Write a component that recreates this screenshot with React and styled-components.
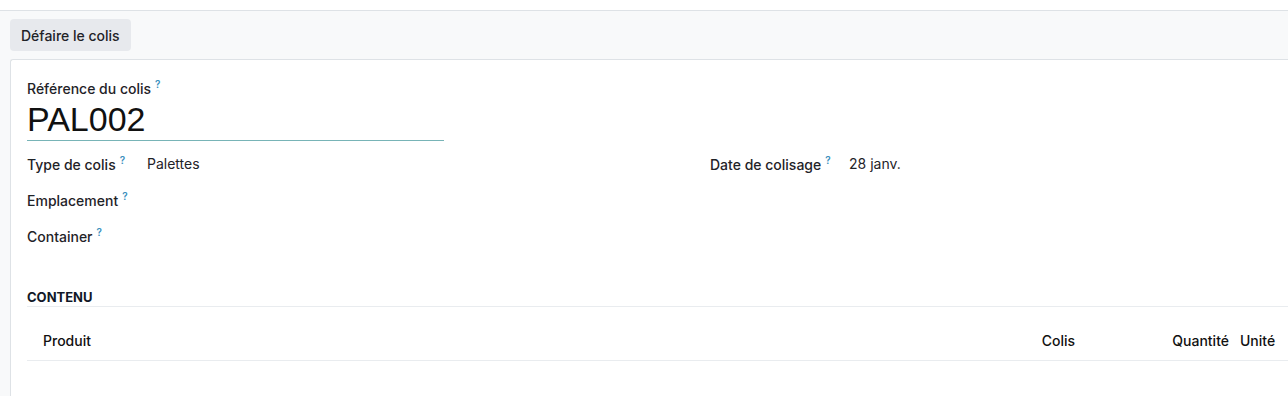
import React from 'react';
import styled, { createGlobalStyle } from 'styled-components';

const GlobalStyle = createGlobalStyle`
  html, body {
    margin: 0;
    padding: 0;
    background: #fff;
    overflow: hidden;
  }
  body {
    font-family: Inter, "Noto Sans", "Liberation Sans", sans-serif;
    color: #1f2328;
    font-size: 14px;
  }
`;

// page root
const Page = styled.div`
  width: 1288px;
  height: 396px;
  padding-top: 10px;
  box-sizing: border-box;
  background: #fff;
  overflow: hidden;
`;

// bande grise + bouton
const ControlPanel = styled.div`
  background: #f8f9fa;
  border-top: 1px solid #dee2e6;
  padding: 8px 10px 8px 10px;
  height: 49px;
  box-sizing: border-box;
  display: flex;
  align-items: flex-start;
`;

const Button = styled.button`
  height: 32px;
  padding: 0 11px;
  border: none;
  border-radius: 4px;
  background: #e7e9ed;
  color: #1f2328;
  font-family: inherit;
  font-size: 14px;
  font-weight: 500;
  cursor: pointer;
`;

const Sheet = styled.div`
  background: #f8f9fa;
  padding-left: 10px;
`;

const Card = styled.div`
  width: 1320px;
  height: 340px;
  background: #fff;
  border-top: 1px solid #dee2e6;
  border-left: 1px solid #dee2e6;
  border-top-left-radius: 3px;
  padding: 15px 16px 0 16px;
  box-sizing: border-box;
`;

const TitleLabel = styled.div`
  font-weight: 500;
  font-size: 14px;
  line-height: 18px;
`;

const Help = styled.sup`
  color: #3a8fbd;
  font-size: 10px;
  font-weight: 600;
  margin-left: 4px;
  vertical-align: 6px;
`;

const NameInput = styled.div`
  width: 417px;
  margin-top: 1px;
  font-family: "Liberation Sans", Arial, sans-serif;
  font-size: 34px;
  line-height: 41px;
  color: #111;
  border-bottom: 1px solid #78b4b7;
`;

const Groups = styled.div`
  display: grid;
  grid-template-columns: 683px 1fr;
  margin-top: 10px;
`;

const Group = styled.div`
  display: flex;
  flex-direction: column;
  gap: 12px;
`;

const Field = styled.div`
  display: grid;
  grid-template-columns: ${p => p.labelWidth}px 1fr;
  align-items: center;
  height: 24px;
`;

const Label = styled.div`
  font-weight: 500;
`;

const Value = styled.div`
  color: #1f2328;
`;

const Section = styled.div`
  margin-top: 42px;
  font-size: 13px;
  line-height: 17px;
  font-weight: 700;
  text-transform: uppercase;
  color: #111827;
  border-bottom: 1px solid #e9ecef;
  width: 1266px;
`;

const TableHead = styled.div`
  display: grid;
  grid-template-columns: 933px 123px 154px 56px;
  width: 1266px;
  height: 54px;
  align-items: end;
  padding-bottom: 11px;
  box-sizing: border-box;
  border-bottom: 1px solid #e9ecef;
  font-weight: 500;
  color: #111;
`;

const Th = styled.div`
  text-align: ${p => p.align || 'left'};
  padding: ${p => p.pad};
`;

export default function App() {
  return (
    <>
      <GlobalStyle />
      <Page>
        <ControlPanel>
          <Button>Défaire le colis</Button>
        </ControlPanel>
        <Sheet>
          <Card>
            <TitleLabel>
              Référence du colis<Help>?</Help>
            </TitleLabel>
            <NameInput>PAL002</NameInput>
            <Groups>
              <Group>
                <Field labelWidth={120}>
                  <Label>Type de colis<Help>?</Help></Label>
                  <Value>Palettes</Value>
                </Field>
                <Field labelWidth={120}>
                  <Label>Emplacement<Help>?</Help></Label>
                  <Value></Value>
                </Field>
                <Field labelWidth={120}>
                  <Label>Container<Help>?</Help></Label>
                  <Value></Value>
                </Field>
              </Group>
              <Group>
                <Field labelWidth={139}>
                  <Label>Date de colisage<Help>?</Help></Label>
                  <Value>28 janv.</Value>
                </Field>
              </Group>
            </Groups>
            <Section>Contenu</Section>
            <TableHead>
              <Th pad="0 0 0 16px">Produit</Th>
              <Th align="right" pad="0 8px 0 0">Colis</Th>
              <Th align="right" pad="0 8px 0 0">Quantité</Th>
              <Th pad="0 0 0 3px">Unité</Th>
            </TableHead>
          </Card>
        </Sheet>
      </Page>
    </>
  );
}
